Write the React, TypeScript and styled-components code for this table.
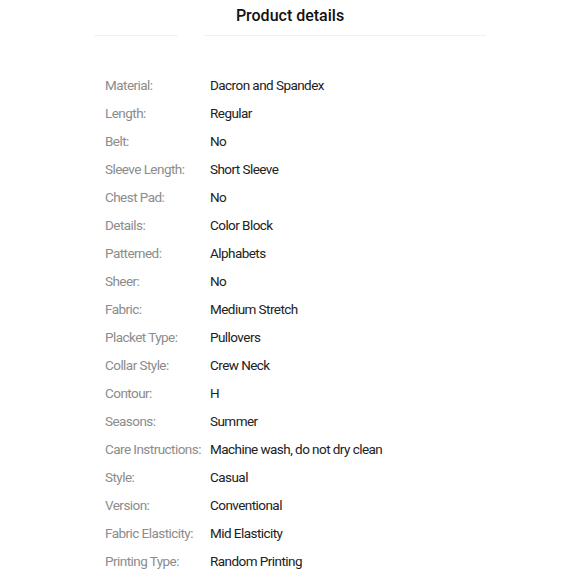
import React from "react";
import styled, { createGlobalStyle } from "styled-components";

const Global = createGlobalStyle`
  html, body { margin: 0; padding: 0; background: #fff; }
  body { font-family: Roboto, "Noto Sans", Arial, sans-serif; }
`;

const Page = styled.div`
  width: 580px;
  display: flex;
  flex-direction: column;
  align-items: center;
`;

const Title = styled.h2`
  margin: 0;
  padding-top: 6px;
  height: 24px;
  font-size: 16px;
  line-height: 20px;
  font-weight: 500;
  color: #111;
`;

const Tabs = styled.div`
  width: 392px;
  display: flex;
  gap: 27px;
  margin-top: 5px;
`;

const TabLine = styled.div<{ $w: string }>`
  height: 1px;
  background: #f0f0f0;
  flex: ${(p) => p.$w};
`;

const Table = styled.div`
  width: 392px;
  box-sizing: border-box;
  padding: 35px 0 0 11px;
  display: flex;
  flex-direction: column;
`;

const Row = styled.div`
  display: flex;
  height: 28px;
  align-items: center;
  font-size: 13.5px;
  letter-spacing: -0.55px;
`;

const Label = styled.div`
  width: 105px;
  flex: none;
  color: #8c8c8c;
  white-space: nowrap;
`;

const Value = styled.div`
  color: #222;
  white-space: nowrap;
`;

const rows: [string, string][] = [
  ["Material:", "Dacron and Spandex"],
  ["Length:", "Regular"],
  ["Belt:", "No"],
  ["Sleeve Length:", "Short Sleeve"],
  ["Chest Pad:", "No"],
  ["Details:", "Color Block"],
  ["Patterned:", "Alphabets"],
  ["Sheer:", "No"],
  ["Fabric:", "Medium Stretch"],
  ["Placket Type:", "Pullovers"],
  ["Collar Style:", "Crew Neck"],
  ["Contour:", "H"],
  ["Seasons:", "Summer"],
  ["Care Instructions:", "Machine wash, do not dry clean"],
  ["Style:", "Casual"],
  ["Version:", "Conventional"],
  ["Fabric Elasticity:", "Mid Elasticity"],
  ["Printing Type:", "Random Printing"],
];

export default function App() {
  return (
    <Page>
      <Global />
      <Title>Product details</Title>
      <Tabs>
        <TabLine $w="0 0 84px" />
        <TabLine $w="1" />
      </Tabs>
      <Table>
        {rows.map(([l, v]) => (
          <Row key={l}>
            <Label>{l}</Label>
            <Value>{v}</Value>
          </Row>
        ))}
      </Table>
    </Page>
  );
}
